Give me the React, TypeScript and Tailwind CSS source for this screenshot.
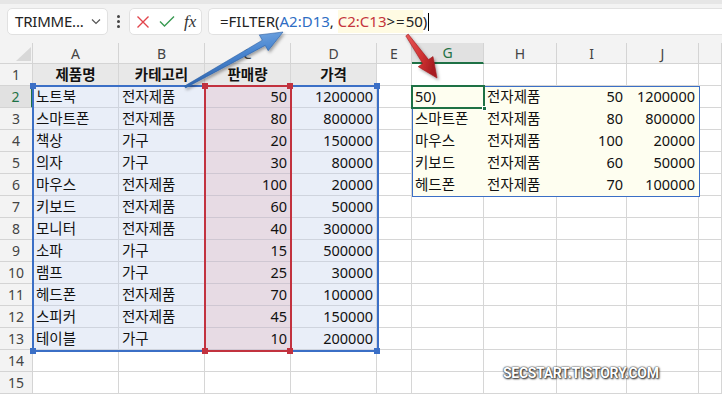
import React from 'react';

const FONT = { fontFamily: '"Noto Sans", "Noto Sans CJK KR", sans-serif' };

const headers = ['', 'A', 'B', 'C', 'D', 'E', 'G', 'H', 'I', 'J', ''];

const table: (string | number)[][] = [
  ['노트북', '전자제품', 50, 1200000],
  ['스마트폰', '전자제품', 80, 800000],
  ['책상', '가구', 20, 150000],
  ['의자', '가구', 30, 80000],
  ['마우스', '전자제품', 100, 20000],
  ['키보드', '전자제품', 60, 50000],
  ['모니터', '전자제품', 40, 300000],
  ['소파', '가구', 15, 500000],
  ['램프', '가구', 25, 30000],
  ['헤드폰', '전자제품', 70, 100000],
  ['스피커', '전자제품', 45, 150000],
  ['테이블', '가구', 10, 200000],
];

const result: (string | number)[][] = [
  ['50)', '전자제품', 50, 1200000],
  ['스마트폰', '전자제품', 80, 800000],
  ['마우스', '전자제품', 100, 20000],
  ['키보드', '전자제품', 60, 50000],
  ['헤드폰', '전자제품', 70, 100000],
];

// value shown in a given cell (row 1..15, col index 1..10)
function cellValue(r: number, c: number): string | number | null {
  if (r === 1 && c >= 1 && c <= 4) return ['제품명', '카테고리', '판매량', '가격'][c - 1];
  if (r >= 2 && r <= 13 && c >= 1 && c <= 4) return table[r - 2][c - 1];
  if (r >= 2 && r <= 6 && c >= 6 && c <= 9) return result[r - 2][c - 6];
  return null;
}

function cellBg(r: number, c: number) {
  if (r === 1 && c >= 1 && c <= 4) return 'bg-[#e8e8e8] border-[#d6d6d6]';
  if (r >= 2 && r <= 13 && c === 3) return 'bg-[#e7dbe4] border-[#cfc7d2]';
  if (r >= 2 && r <= 13 && c >= 1 && c <= 4) return 'bg-[#e9eef8] border-[#cfd4de]';
  // spill range has no inner gridlines
  if (r >= 2 && r <= 6 && c >= 6 && c <= 9) return 'bg-[#fefef0] border-[#fefef0]';
  return 'bg-white border-[#d6d6d6]';
}

const Sq = ({ className }: { className: string }) => (
  <div className={'absolute w-[6px] h-[6px] ' + className} />
);

const Toolbar = () => (
  <div className="h-[43px] bg-[#f3f3f3] border-t-[4px] border-[#e6e6e6] flex items-start pt-[4px]">
    {/* name box */}
    <div className="ml-[7px] w-[101px] h-[27px] rounded-[5px] bg-white border border-[#e1e1e1] flex items-center pl-[7px] pr-[6px]">
      <span className="text-[15px] text-[#222] tracking-[-0.2px]">TRIMME...</span>
      <svg className="ml-auto" width="10" height="7" viewBox="0 0 10 7">
        <path d="M1 1.5 L5 5.5 L9 1.5" fill="none" stroke="#555" strokeWidth="1.2" />
      </svg>
    </div>
    <div className="w-[20px] h-[27px] flex flex-col items-center justify-center gap-[2px]">
      <span className="w-[3px] h-[3px] rounded-full bg-[#444]" />
      <span className="w-[3px] h-[3px] rounded-full bg-[#444]" />
      <span className="w-[3px] h-[3px] rounded-full bg-[#444]" />
    </div>
    {/* cancel / enter / fx */}
    <div className="ml-[1px] w-[73px] h-[27px] rounded-[5px] bg-white border border-[#e1e1e1] flex items-center pl-[6px] gap-[9px]">
      <svg width="14" height="14" viewBox="0 0 14 14">
        <path d="M1.5 1.5 L12.5 12.5 M12.5 1.5 L1.5 12.5" stroke="#e2444b" strokeWidth="1.4" />
      </svg>
      <svg width="16" height="13" viewBox="0 0 16 13">
        <path d="M1 6.5 L5.5 11 L15 1.5" fill="none" stroke="#3a9a52" strokeWidth="1.4" />
      </svg>
      <span className="text-[17px] italic text-[#333] leading-none" style={{ fontFamily: '"Liberation Serif", serif' }}>
        fx
      </span>
    </div>
    {/* formula */}
    <div className="ml-[6px] flex-1 h-[27px] rounded-l-[5px] bg-white border border-r-0 border-[#e1e1e1] flex items-center pl-[11px] text-[15px] text-[#222]">
      <span>=FILTER(</span>
      <span className="text-[#2e6dc4]">A2:D13</span>
      <span>,&nbsp;</span>
      <span className="bg-[#fffbe3] flex items-center h-[23px]">
        <span className="text-[#c5343c]">C2:C13</span>
        <span className="tracking-[1px]">&gt;=</span>
        <span>50</span>
      </span>
      <span>)</span>
      <span className="w-[1px] h-[18px] bg-black ml-[1px]" />
    </div>
  </div>
);

const Sheet = () => {
  const cells: React.ReactNode[] = [];
  // column header row
  headers.forEach((h, c) => {
    let cls = 'bg-[#f3f3f3] text-[#444] border-r border-b border-[#d4d4d4]';
    if (c === 6) cls = 'bg-[#e1e1e1] text-[#1e7145] border-r border-[#d4d4d4] border-b-2 border-b-[#1e7145]';
    cells.push(
      <div key={'h' + c} className={'relative flex items-center justify-center text-[14px] ' + cls}>
        {c === 0 && (
          <svg className="absolute right-[1px] bottom-[2px]" width="15" height="14" viewBox="0 0 15 14">
            <path d="M15 0 L15 14 L0 14 Z" fill="#d8d8d8" />
          </svg>
        )}
        {h}
      </div>
    );
  });
  for (let r = 1; r <= 15; r++) {
    for (let c = 0; c <= 10; c++) {
      if (c === 0) {
        const sel = r === 2;
        cells.push(
          <div
            key={r + '-' + c}
            className={
              'flex items-center justify-center text-[14px] border-b border-[#d4d4d4] ' +
              (sel ? 'bg-[#e1e1e1] text-[#1e7145] border-r-2 border-r-[#1e7145]' : 'bg-[#f3f3f3] text-[#444] border-r')
            }
          >
            {r}
          </div>
        );
        continue;
      }
      const v = cellValue(r, c);
      const isNum = typeof v === 'number';
      const isHead = r === 1 && c >= 1 && c <= 4;
      cells.push(
        <div
          key={r + '-' + c}
          className={
            'flex items-center overflow-hidden whitespace-nowrap text-[14.5px] text-[#111] border-r border-b ' +
            cellBg(r, c) +
            (isHead ? ' justify-center font-bold' : isNum ? ' justify-end pr-[3px]' : ' pl-[3px]')
          }
        >
          {v}
        </div>
      );
    }
  }

  return (
    <div className="relative">
      <div className="grid grid-cols-[33px_86px_86px_86px_86px_35px_72px_73px_70px_72px_1fr] grid-rows-[21px_repeat(15,22px)]">
        {cells}
      </div>

      {/* A2:D13 reference */}
      <div className="absolute left-[32px] top-[42px] w-[347px] h-[267px] border-2 border-[#3b6fc6]" />
      <Sq className="left-[30px] top-[40px] bg-[#3b6fc6]" />
      <Sq className="left-[374px] top-[40px] bg-[#3b6fc6]" />
      <Sq className="left-[30px] top-[305px] bg-[#3b6fc6]" />
      <Sq className="left-[374px] top-[305px] bg-[#3b6fc6]" />

      {/* C2:C13 reference */}
      <div className="absolute left-[204px] top-[42px] w-[88px] h-[267px] border-2 border-[#c2323f]" />
      <Sq className="left-[202px] top-[40px] bg-[#c2323f]" />
      <Sq className="left-[287px] top-[40px] bg-[#c2323f]" />
      <Sq className="left-[202px] top-[305px] bg-[#c2323f]" />
      <Sq className="left-[287px] top-[305px] bg-[#c2323f]" />

      {/* spill range */}
      <div className="absolute left-[412px] top-[43px] w-[288px] h-[111px] border border-[#3b6fc6]" />

      {/* active cell G2 */}
      <div className="absolute left-[411px] top-[42px] w-[74px] h-[24px] border-2 border-[#1e7145]" />
      <div className="absolute left-[482px] top-[63px] w-[5px] h-[5px] bg-[#1e7145] border border-white" />
    </div>
  );
};

const Arrows = () => (
  <svg className="absolute inset-0 pointer-events-none" width="722" height="395" viewBox="0 0 722 395">
    <defs>
      <linearGradient id="blueG" x1="0" y1="0" x2="0.3" y2="1">
        <stop offset="0" stopColor="#8ab8ea" />
        <stop offset="0.5" stopColor="#4a86d0" />
        <stop offset="1" stopColor="#2a5fa8" />
      </linearGradient>
      <linearGradient id="redG" x1="0" y1="0" x2="1" y2="0.3">
        <stop offset="0" stopColor="#e85a5a" />
        <stop offset="0.6" stopColor="#d03232" />
        <stop offset="1" stopColor="#a81e22" />
      </linearGradient>
      <filter id="sh" x="-20%" y="-20%" width="140%" height="140%">
        <feDropShadow dx="1.5" dy="2" stdDeviation="1.5" floodColor="#000" floodOpacity="0.35" />
      </filter>
    </defs>
    <polygon
      points="184.5,86.1 262.3,40.2 259.3,34.9 283,32 268.2,50.7 265.2,45.4 185.5,87.9"
      fill="url(#blueG)"
      stroke="#2b5fa5"
      strokeWidth="0.6"
      filter="url(#sh)"
    />
    <polygon
      points="405.8,35.9 422.7,63.6 418.2,66.7 437,78 433,56.5 428.5,59.6 408.2,34.1"
      fill="url(#redG)"
      stroke="#9e1c20"
      strokeWidth="0.6"
      filter="url(#sh)"
    />
  </svg>
);

export default function App() {
  return (
    <div className="relative w-[722px] h-[395px] overflow-hidden bg-white" style={FONT}>
      <Toolbar />
      <Sheet />
      <Arrows />
      <div
        className="absolute left-[503px] top-[366px] text-[14px] font-bold text-white tracking-[-0.3px] leading-none"
        style={{ fontFamily: 'Roboto, sans-serif', textShadow: '0 0 2px #333, 1px 1px 2px #222, 0 0 1px #333' }}
      >
        SECSTART.TISTORY.COM
      </div>
    </div>
  );
}
